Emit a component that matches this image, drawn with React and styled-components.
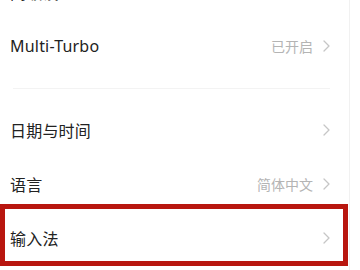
import React from "react";
import styled, { createGlobalStyle } from "styled-components";

const Global = createGlobalStyle`
  html, body {
    margin: 0;
    padding: 0;
    background: #ffffff;
    overflow: hidden;
  }
  body {
    font-family: "Noto Sans", "Noto Sans CJK SC", sans-serif;
    -webkit-font-smoothing: antialiased;
  }
`;

const Frame = styled.div`
  width: 349px;
  height: 270px;
  border-right: 1px solid #f1f1f1;
  overflow: hidden;
`;

const List = styled.div`
  display: flex;
  flex-direction: column;
  margin-top: -35px;
`;

const Row = styled.div`
  position: relative;
  height: 54px;
  display: flex;
  align-items: center;
  justify-content: space-between;
  padding: 0 19px 0 10px;
`;

const Label = styled.span`
  font-size: 16px;
  color: #222222;
  letter-spacing: 0.2px;
`;

const Right = styled.div`
  display: flex;
  align-items: center;
  gap: 10px;
`;

const Value = styled.span`
  font-size: 14px;
  color: #b4b4b4;
`;

const Section = styled.div`
  height: 30px;
  display: flex;
  align-items: center;
  padding: 0 19px 0 13px;
`;

const Divider = styled.div`
  flex: 1;
  height: 1px;
  background: #f3f3f3;
`;

const Highlight = styled.div`
  position: absolute;
  top: -7px;
  left: 0;
  right: 1px;
  bottom: -1px;
  border: 5px solid #b8160f;
  pointer-events: none;
`;

const Chevron = () => (
  <svg width="7" height="12" viewBox="0 0 7 12">
    <polyline
      points="1,1 6,6 1,11"
      fill="none"
      stroke="#c6c6c6"
      strokeWidth="1.3"
      strokeLinecap="round"
      strokeLinejoin="round"
    />
  </svg>
);

const Item = ({ label, value, highlighted }) => (
  <Row>
    <Label>{label}</Label>
    <Right>
      {value && <Value>{value}</Value>}
      <Chevron />
    </Right>
    {highlighted && <Highlight />}
  </Row>
);

export default function App() {
  return (
    <Frame>
      <Global />
      <List>
        <Item label="高级设置" />
        <Item label="Multi-Turbo" value="已开启" />
        <Section>
          <Divider />
        </Section>
        <Item label="日期与时间" />
        <Item label="语言" value="简体中文" />
        <Item label="输入法" highlighted />
      </List>
    </Frame>
  );
}
